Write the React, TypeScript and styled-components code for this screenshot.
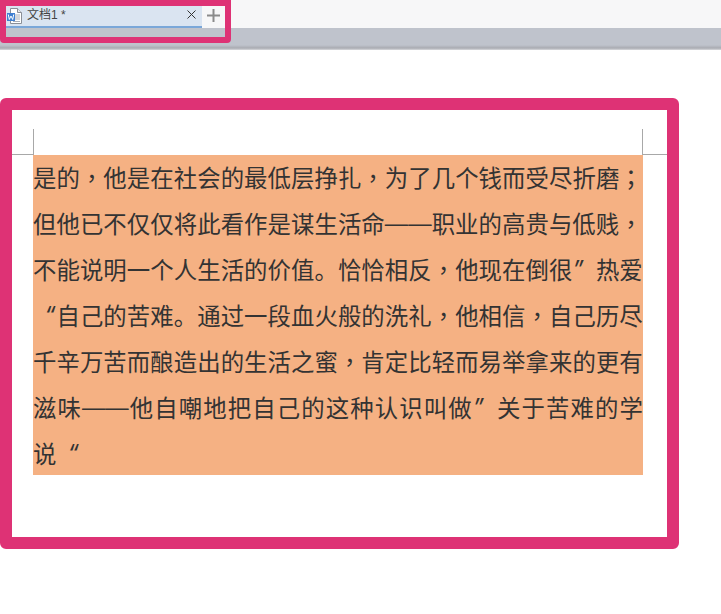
import React from "react";
import styled, { createGlobalStyle } from "styled-components";

const Global = createGlobalStyle`
  html, body { margin: 0; padding: 0; background: #fff; }
  body { width: 721px; height: 614px; overflow: hidden; font-family: "Liberation Sans", "Noto Sans CJK SC", sans-serif; }
`;
const Page = styled.div`width: 721px; height: 614px; display: flex; flex-direction: column; background: #fff;`;
const TopBar = styled.div`height: 50px; display: flex; flex-direction: column; position: relative;`;
const TabStrip = styled.div`height: 28px; background: #f7f7f8;`;
const GreyBand = styled.div`height: 22px; background: linear-gradient(#bfc3cc 0 17px, #a9abb2 20px, #d8d8dc);`;
const TabFrame = styled.div`
  position: absolute; left: 0; top: 0; width: 231px; height: 43px; box-sizing: border-box;
  border: 6px solid #de3275; border-radius: 0 0 4px 4px; display: flex; flex-direction: column; background: #bfc3cc;
`;
const TabRow = styled.div`height: 22px; display: flex;`;
const Tab = styled.div`
  width: 196px; height: 22px; box-sizing: border-box; background: #dae4f1; border-bottom: 2px solid #7aa7d9;
  display: flex; align-items: center; padding: 0 6px 3px 1px;
`;
const TabIcon = styled.svg`margin-top: 2px;`;
const TabTitle = styled.span`flex: 1; margin-left: 5px; margin-top: -2px; font-size: 12px; color: #444;`;
const Close = styled.svg`width: 9px; height: 9px;`;
const PlusCell = styled.div`flex: 1; background: #f7f7f8; display: flex; align-items: center; justify-content: center; padding-bottom: 4px;`;
const Sheet = styled.div`
  margin-top: 48px; width: 679px; height: 451px; box-sizing: border-box; border: 12px solid #de3275; border-radius: 6px;
  position: relative; background: #fff; padding: 45px 24px 0 21px;
`;
const CropV = styled.i<{ $side: "left" | "right"; $offset: number }>`
  position: absolute; top: 19px; ${(p) => p.$side}: ${(p) => p.$offset}px; width: 1px; height: 25px; background: #a8a8a8;
`;
const CropH = styled.i<{ $side: "left" | "right"; $width: number }>`
  position: absolute; top: 44px; ${(p) => p.$side}: 0; width: ${(p) => p.$width}px; height: 1px; background: #a8a8a8;
`;
const Selected = styled.div`
  width: 610px; height: 320px; background: #f5b183; color: #333; font-size: 23.4px; line-height: 46px;
  font-family: "Noto Sans CJK SC", sans-serif; overflow: hidden;
`;
const Line = styled.div<{ $short?: boolean }>`
  white-space: nowrap; display: flex; justify-content: ${(p) => (p.$short ? "flex-start" : "space-between")}; margin-top: -1px; margin-bottom: 1px;
`;
const Punct = styled.span`font-family: "Noto Sans CJK TC", sans-serif;`;
const Dash = styled.span`font-family: "Liberation Sans", sans-serif;`;
const Quote = styled.span<{ $open?: boolean }>`
  font-family: "Inter", sans-serif; width: 1em; display: inline-block; font-style: italic;
  text-align: ${(p) => (p.$open ? "right" : "left")};
  padding-right: ${(p) => (p.$open ? "1px" : "0")}; box-sizing: border-box;
`;

const C = "\uFF0C";
const S = "\uFF1B";
const lines = [
  `是的${C}他是在社会的最低层挣扎${C}为了几个钱而受尽折磨${S}`,
  `但他已不仅仅将此看作是谋生活命——职业的高贵与低贱${C}`,
  `不能说明一个人生活的价值。恰恰相反${C}他现在倒很”热爱`,
  `“自己的苦难。通过一段血火般的洗礼${C}他相信${C}自己历尽`,
  `千辛万苦而酿造出的生活之蜜${C}肯定比轻而易举拿来的更有`,
  `滋味——他自嘲地把自己的这种认识叫做”关于苦难的学`,
];

const tokens = (l: string) => l.match(/——|./gu) ?? [];
const chars = (l: string) =>
  tokens(l).map((c, i) => {
    if (c === C || c === S) return <Punct key={i}>{c}</Punct>;
    if (c === "——") return <Dash key={i}>{c}</Dash>;
    if (c === "“" || c === "”") return <Quote key={i} $open={c === "“"}>{c}</Quote>;
    return <span key={i}>{c}</span>;
  });

export default function App() {
  return (
    <Page>
      <Global />
      <TopBar>
        <TabStrip />
        <GreyBand />
        <TabFrame>
          <TabRow>
            <Tab>
              <TabIcon width="15" height="16" viewBox="0 0 15 16">
                <path d="M3.500.5h7l4 4v11h-11z" fill="#fff" stroke="#8a8f98" />
                <path d="M10.500.5v4h4" fill="#e6e8ec" stroke="#8a8f98" />
                <path d="M8 7h5M8 9h5M8 11h5M6 13.500h7" stroke="#a9adb5" />
                <rect x="0" y="5" width="8" height="8" fill="#3f7fd1" />
                <path d="M1.300 6.500l1 5 1.700-3.500 1.700 3.500 1-5" fill="none" stroke="#fff" />
              </TabIcon>
              <TabTitle>文档1 *</TabTitle>
              <Close viewBox="0 0 9 9"><path d="M.5.5l8 8M8.500.5l-8 8" stroke="#333" fill="none" /></Close>
            </Tab>
            <PlusCell>
              <svg width="13" height="13" viewBox="0 0 13 13"><path d="M6.500 0v13M0 6.500h13" stroke="#8b8b8b" strokeWidth="2" fill="none" /></svg>
            </PlusCell>
          </TabRow>
        </TabFrame>
      </TopBar>
      <Sheet>
        <CropV $side="left" $offset={21} />
        <CropV $side="right" $offset={24} />
        <CropH $side="left" $width={22} />
        <CropH $side="right" $width={25} />
        <Selected>
          {lines.map((l) => (
            <Line key={l}>{chars(l)}</Line>
          ))}
          <Line $short>{chars("说“")}</Line>
        </Selected>
      </Sheet>
    </Page>
  );
}
